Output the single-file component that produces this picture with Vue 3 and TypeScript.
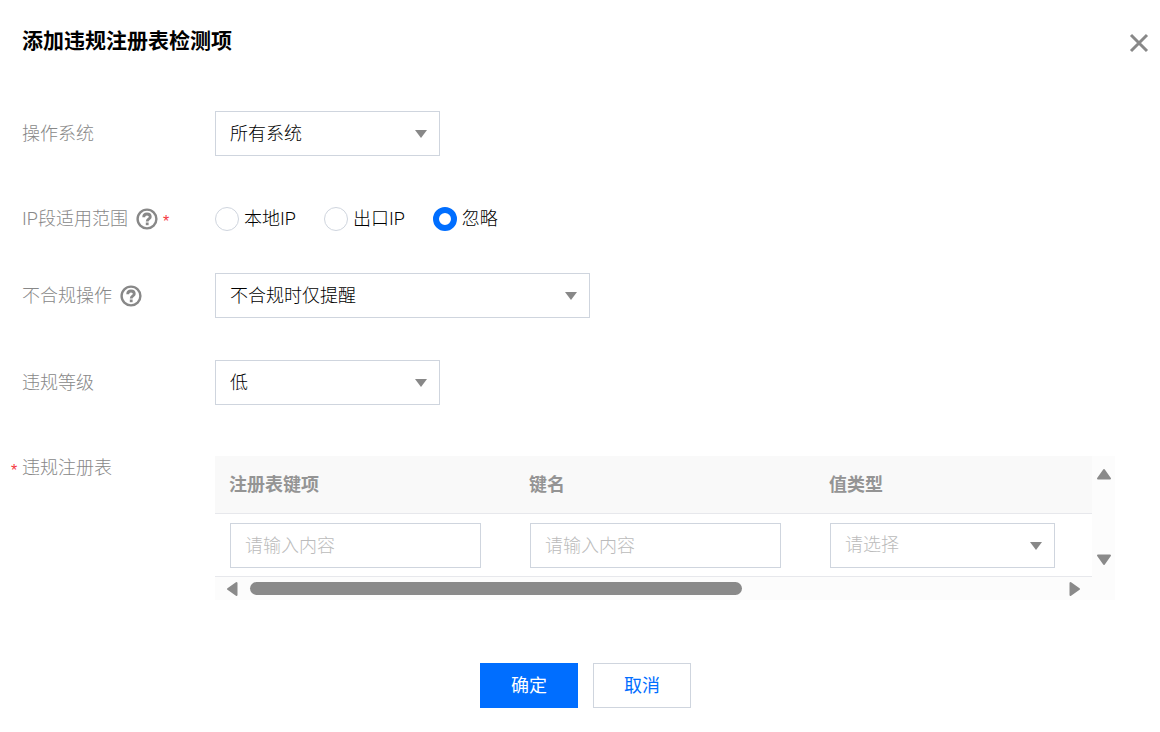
<script setup lang="ts">
import { ref } from 'vue'

const os = ref('所有系统')
const scope = ref('忽略')
const action = ref('不合规时仅提醒')
const level = ref('低')
const keyPath = ref('')
const keyName = ref('')
const valueType = ref('')

const osOptions = ['所有系统', 'Windows', 'macOS', 'Linux']
const scopeOptions = ['本地IP', '出口IP', '忽略']
const actionOptions = ['不合规时仅提醒', '不合规时断网']
const levelOptions = ['低', '中', '高']
const typeOptions = ['REG_SZ', 'REG_DWORD', 'REG_BINARY']
</script>

<template>
  <main class="dialog">
    <header class="head">
      <h1>添加违规注册表检测项</h1>
      <button class="close" type="button" aria-label="关闭">
        <svg width="20" height="20" viewBox="0 0 20 20"><path d="M2 2L18 18M18 2L2 18" stroke="#888" stroke-width="3" fill="none" /></svg>
      </button>
    </header>

    <form @submit.prevent>
      <div class="row">
        <label class="label" for="os">操作系统</label>
        <div class="select">
          <select id="os" v-model="os">
            <option v-for="o in osOptions" :key="o">{{ o }}</option>
          </select>
          <svg class="caret" width="12" height="8" viewBox="0 0 12 8"><path d="M0 0H12L6 8Z" fill="#888" /></svg>
        </div>
      </div>

      <div class="row scope" role="radiogroup" aria-labelledby="scope-label">
        <div class="label">
          <span id="scope-label">IP段适用范围</span>
          <svg class="help" width="22" height="22" viewBox="0 0 22 22" fill="none" stroke="#888">
            <circle cx="11" cy="11" r="9.4" stroke-width="2.4" />
            <path d="M7.7 9.2C7.7 7 9.2 6 11 6S14.3 7.1 14.3 8.9C14.3 10.8 11.2 11 11.2 13.4" stroke-width="2.8" />
            <path d="M11.2 14.5V17.2" stroke-width="2.8" />
          </svg>
          <span class="star">*</span>
        </div>
        <div class="radios">
          <label v-for="s in scopeOptions" :key="s" class="radio">
            <input v-model="scope" type="radio" name="scope" :value="s" />
            <span>{{ s }}</span>
          </label>
        </div>
      </div>

      <div class="row">
        <label class="label" for="action">
          <span>不合规操作</span>
          <svg class="help wide" width="22" height="22" viewBox="0 0 22 22" fill="none" stroke="#888">
            <circle cx="11" cy="11" r="9.4" stroke-width="2.4" />
            <path d="M7.7 9.2C7.7 7 9.2 6 11 6S14.3 7.1 14.3 8.9C14.3 10.8 11.2 11 11.2 13.4" stroke-width="2.8" />
            <path d="M11.2 14.5V17.2" stroke-width="2.8" />
          </svg>
        </label>
        <div class="select large">
          <select id="action" v-model="action">
            <option v-for="o in actionOptions" :key="o">{{ o }}</option>
          </select>
          <svg class="caret" width="12" height="8" viewBox="0 0 12 8"><path d="M0 0H12L6 8Z" fill="#888" /></svg>
        </div>
      </div>

      <div class="row">
        <label class="label" for="level">违规等级</label>
        <div class="select">
          <select id="level" v-model="level">
            <option v-for="o in levelOptions" :key="o">{{ o }}</option>
          </select>
          <svg class="caret" width="12" height="8" viewBox="0 0 12 8"><path d="M0 0H12L6 8Z" fill="#888" /></svg>
        </div>
      </div>

      <div class="row registry">
        <div class="label required"><span class="star">*</span><span id="registry-label">违规注册表</span></div>
        <div class="scroller">
          <div class="viewport">
            <table aria-labelledby="registry-label">
              <thead>
                <tr>
                  <th scope="col">注册表键项</th>
                  <th scope="col">键名</th>
                  <th scope="col">值类型</th>
                </tr>
              </thead>
              <tbody>
                <tr>
                  <td><input v-model="keyPath" class="text" type="text" placeholder="请输入内容" aria-label="注册表键项" /></td>
                  <td><input v-model="keyName" class="text" type="text" placeholder="请输入内容" aria-label="键名" /></td>
                  <td>
                    <div class="select">
                      <select v-model="valueType" class="empty" aria-label="值类型">
                        <option value="" disabled>请选择</option>
                        <option v-for="o in typeOptions" :key="o">{{ o }}</option>
                      </select>
                      <svg class="caret" width="12" height="8" viewBox="0 0 12 8"><path d="M0 0H12L6 8Z" fill="#888" /></svg>
                    </div>
                  </td>
                </tr>
              </tbody>
            </table>
          </div>
          <div class="bar-y">
            <svg width="16" height="12" viewBox="0 0 16 12"><path d="M8 2L14 10.5H2Z" fill="#8a8a8a" stroke="#8a8a8a" stroke-width="2" stroke-linejoin="round" /></svg>
            <svg width="16" height="12" viewBox="0 0 16 12"><path d="M8 10L14 1.5H2Z" fill="#8a8a8a" stroke="#8a8a8a" stroke-width="2" stroke-linejoin="round" /></svg>
          </div>
          <div class="bar-x">
            <svg width="12" height="16" viewBox="0 0 12 16"><path d="M2 8L10.5 2V14Z" fill="#8a8a8a" stroke="#8a8a8a" stroke-width="2" stroke-linejoin="round" /></svg>
            <div class="track"><div class="thumb"></div></div>
            <svg width="12" height="16" viewBox="0 0 12 16"><path d="M10 8L1.5 2V14Z" fill="#8a8a8a" stroke="#8a8a8a" stroke-width="2" stroke-linejoin="round" /></svg>
          </div>
        </div>
      </div>

      <footer class="actions">
        <button class="btn primary" type="submit">确定</button>
        <button class="btn" type="button">取消</button>
      </footer>
    </form>
  </main>
</template>

<style>
body {
  margin: 0;
  background: #fff;
}
</style>

<style scoped>
.dialog {
  box-sizing: border-box;
  padding: 24px 11px 24px 22px;
  color: #000;
  font: 300 18px/24px Roboto, "Noto Sans CJK SC", sans-serif;
}
.head {
  display: flex;
  align-items: flex-start;
  justify-content: space-between;
  margin-bottom: 53px;
}
h1 {
  margin: 0;
  font-size: 21px;
  font-weight: 700;
  line-height: 34px;
}
.close {
  display: flex;
  margin-top: 9px;
  padding: 0;
  border: 0;
  background: none;
}
.row {
  display: flex;
  align-items: center;
  margin-bottom: 42px;
}
.scope {
  min-height: 42px;
  margin-bottom: 33px;
}
.label {
  display: flex;
  flex: 0 0 193px;
  align-items: center;
  color: #888;
}
.help {
  margin-left: 8px;
}
.star {
  margin-left: 5px;
  padding-top: 6px;
  color: #f5393d;
  font-family: "Liberation Sans", sans-serif;
  font-size: 16px;
  line-height: 18px;
}
.required .star {
  width: 7px;
  margin: 0 4px 0 -11px;
}
.select {
  position: relative;
  width: 225px;
}
.large {
  width: 375px;
}
select,
.text {
  box-sizing: border-box;
  display: block;
  width: 100%;
  height: 45px;
  margin: 0;
  padding: 0 14px;
  border: 1px solid #cfd5de;
  border-radius: 0;
  background: #fff;
  color: #000;
  font: inherit;
  appearance: none;
}
.text {
  width: 251px;
}
.text::placeholder,
select.empty {
  color: #bbb;
  opacity: 1;
}
.caret {
  position: absolute;
  top: 19px;
  right: 13px;
  pointer-events: none;
}
.radios {
  display: flex;
  gap: 28px;
}
.radio {
  display: flex;
  align-items: center;
  gap: 5px;
}
.radio input {
  box-sizing: border-box;
  width: 24px;
  height: 24px;
  margin: 0;
  border: 1px solid #cfd5de;
  border-radius: 50%;
  background: #fff;
  appearance: none;
}
.radio input:checked {
  border: 6px solid #006eff;
}
.registry {
  align-items: flex-start;
  margin: 51px 34px 63px 0;
}
.scroller {
  display: grid;
  flex: 1;
  grid-template-columns: minmax(0, 1fr) 23px;
  background: #fcfcfc;
}
.viewport {
  overflow: hidden;
}
table {
  width: 100%;
  border-collapse: separate;
  border-spacing: 0;
  table-layout: fixed;
  background: #fff;
}
th,
td {
  box-sizing: border-box;
  text-align: left;
  border-bottom: 1px solid #e7e8ec;
}
th:not(:last-child) {
  width: 300px;
}
th {
  height: 58px;
  padding: 0 14px;
  background: #f9f9f9;
  color: #949494;
  font-weight: 700;
}
td {
  height: 63px;
  padding: 0 15px;
}
.bar-y {
  display: flex;
  flex-direction: column;
  justify-content: space-between;
  align-items: center;
  padding: 12px 0 11px;
}
.bar-x {
  display: flex;
  align-items: center;
  height: 23px;
  padding: 0 11px;
}
.track {
  flex: 1;
  padding: 0 12px;
}
.thumb {
  width: 61%;
  height: 13px;
  border-radius: 7px;
  background: #8a8a8a;
}
.actions {
  display: flex;
  justify-content: center;
  gap: 15px;
}
.btn {
  width: 98px;
  height: 45px;
  padding: 0;
  border: 1px solid #cfd5de;
  background: #fff;
  color: #006eff;
  font: inherit;
  font-weight: 400;
}
.primary {
  border-color: #006eff;
  background: #006eff;
  color: #fff;
}
</style>
